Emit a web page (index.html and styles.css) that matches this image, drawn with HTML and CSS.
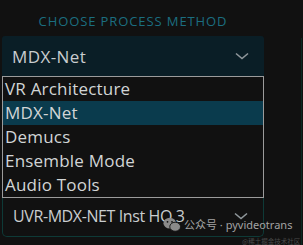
FILE: index.html
```html
<!DOCTYPE html>
<html>
<head>
<meta charset="utf-8">
<link rel="stylesheet" href="styles.css">
</head>
<body>
<div class="panel">
  <div class="title">CHOOSE PROCESS METHOD</div>
  <div class="select select-top">
    <span class="value">MDX-Net</span>
    <svg class="chev" width="14" height="8" viewBox="0 0 14 8"><path d="M1 1.5 L7 6.5 L13 1.5" fill="none" stroke="#8f979b" stroke-width="1.6"/></svg>
  </div>
  <ul class="list">
    <li class="item">VR Architecture</li>
    <li class="item active">MDX-Net</li>
    <li class="item">Demucs</li>
    <li class="item">Ensemble Mode</li>
    <li class="item">Audio Tools</li>
  </ul>
  <div class="select select-bottom">
    <span class="value">UVR-MDX-NET Inst HQ 3</span>
    <svg class="chev" width="14" height="8" viewBox="0 0 14 8"><path d="M1 1.5 L7 6.5 L13 1.5" fill="none" stroke="#8f979b" stroke-width="1.6"/></svg>
  </div>
</div>
<div class="edge"></div>
<div class="watermark">
  <svg class="wx" width="18" height="15" viewBox="0 0 20 16">
    <ellipse cx="7.5" cy="6.5" rx="7" ry="6" fill="#8a8a8a"/>
    <ellipse cx="13.5" cy="10.5" rx="6" ry="5" fill="#8a8a8a" stroke="#111" stroke-width="1"/>
    <circle cx="5" cy="5" r="1" fill="#111"/>
    <circle cx="10" cy="5" r="1" fill="#111"/>
  </svg>
  <span>公众号 · pyvideotrans</span>
</div>
<div class="credit">@稀土掘金技术社区</div>
</body>
</html>
```
FILE: styles.css
```css
html, body {
  margin: 0;
  padding: 0;
  background: #111111;
  width: 303px;
  height: 245px;
  overflow: hidden;
  font-family: "Open Sans", "Noto Sans", sans-serif;
}
.panel {
  width: 262px;
  margin-left: 2px;
}
.title {
  height: 36px;
  box-sizing: border-box;
  padding-top: 13px;
  text-align: center;
  color: #1b6e80;
  font-size: 13px;
  line-height: 16px;
  letter-spacing: 0.9px;
  white-space: nowrap;
}
.select {
  display: flex;
  align-items: center;
  justify-content: space-between;
  box-sizing: border-box;
  padding: 0 15px 0 10px;
  color: #c9cdcf;
  white-space: nowrap;
}
.select-top {
  height: 40px;
  background: #0a1e26;
  border-radius: 3px 3px 0 0;
  font-size: 17px;
  letter-spacing: 0.4px;
}
.select-bottom {
  height: 39px;
  border: 1px solid #0e3a37;
  border-top: none;
  border-radius: 0 0 5px 5px;
  padding-bottom: 2px;
  font-size: 16px;
  letter-spacing: -0.4px;
}
.chev {
  display: block;
}
.list {
  list-style: none;
  margin: 0;
  padding: 0;
  border: 1px solid #9b9b9b;
  background: #111111;
}
.item {
  height: 24px;
  line-height: 24px;
  padding-left: 2px;
  color: #d2d5d6;
  font-size: 17px;
  letter-spacing: 0.2px;
}
.item.active {
  background: #0a3b4d;
}
.edge {
  position: absolute;
  left: 301px;
  top: 38px;
  width: 1px;
  height: 207px;
  background: #0c2a22;
}
.watermark {
  position: absolute;
  left: 163px;
  top: 217px;
  display: flex;
  align-items: center;
  gap: 3px;
  color: #a3a3a3;
  font-size: 11px;
  line-height: 14px;
  white-space: nowrap;
  font-family: "Noto Sans", "Noto Sans CJK SC", sans-serif;
}
.credit {
  position: absolute;
  left: 242px;
  top: 237px;
  color: #4a4a4a;
  font-size: 6.5px;
  line-height: 8px;
  white-space: nowrap;
  font-family: "Noto Sans CJK SC", sans-serif;
}
```
